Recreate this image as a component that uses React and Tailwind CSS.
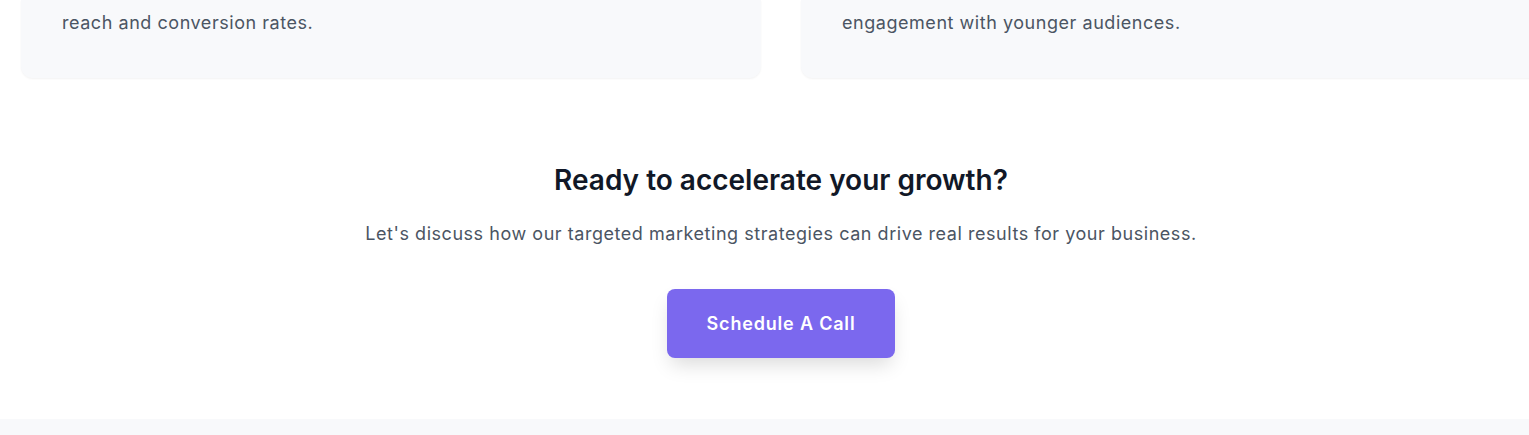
export default function App() {
  const cards = [
    "reach and conversion rates.",
    "engagement with younger audiences.",
  ];

  return (
    <div className="w-full min-h-[435px] overflow-hidden bg-white font-['Inter','Liberation_Sans',sans-serif]">
      <div className="w-[1520px] ml-[21px]">
        <div className="grid grid-cols-2 gap-10">
          {cards.map((text) => (
            <div
              key={text}
              className="rounded-b-xl bg-[#f8f9fb] shadow-[0_1px_2px_rgba(0,0,0,0.05)] px-[41px] pt-[9px] pb-[41px]"
            >
              <p className="text-lg leading-7 tracking-[0.03em] text-[#4b5563]">{text}</p>
            </div>
          ))}
        </div>

        <div className="flex flex-col items-center pt-[84px] pb-[61px]">
          <h2 className="text-[28px] leading-9 font-semibold text-[#111827]">
            Ready to accelerate your growth?
          </h2>
          <p className="mt-[22px] text-lg leading-7 tracking-[0.03em] text-[#4b5563]">
            Let's discuss how our targeted marketing strategies can drive real results for your business.
          </p>
          <button
            type="button"
            className="mt-[41px] h-[69px] px-10 rounded-lg bg-[#7b68ee] text-white text-lg font-semibold tracking-[0.045em] shadow-[0_10px_20px_-4px_rgba(0,0,0,0.15)]"
          >
            Schedule A Call
          </button>
        </div>
      </div>
      <div className="h-4 bg-[#f8f9fb]" />
    </div>
  );
}
